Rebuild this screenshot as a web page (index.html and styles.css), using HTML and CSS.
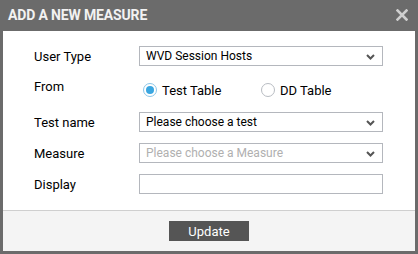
FILE: index.html
```html
<!DOCTYPE html>
<html>
<head>
<meta charset="utf-8">
<link rel="stylesheet" href="styles.css">
</head>
<body>
<div class="dialog">
  <div class="header">
    <div class="title">ADD A NEW MEASURE</div>
    <svg class="close" width="12" height="12" viewBox="0 0 12 12"><path d="M1.5 1.5L10.5 10.5M10.5 1.5L1.5 10.5" stroke="#cfcfcf" stroke-width="2.6" stroke-linecap="square"/></svg>
  </div>
  <div class="body">
    <div class="row">
      <div class="label">User Type</div>
      <div class="select"><span>WVD Session Hosts</span><svg class="chev" width="9" height="6" viewBox="0 0 9 6"><path d="M1 1L4.5 4.5L8 1" stroke="#555" stroke-width="2" fill="none"/></svg></div>
    </div>
    <div class="row radio-row">
      <div class="label">From</div>
      <div class="radios">
        <div class="radio checked"><span class="circle"><span class="dot"></span></span><span>Test Table</span></div>
        <div class="radio"><span class="circle"></span><span>DD Table</span></div>
      </div>
    </div>
    <div class="row">
      <div class="label">Test name</div>
      <div class="select"><span>Please choose a test</span><svg class="chev" width="9" height="6" viewBox="0 0 9 6"><path d="M1 1L4.5 4.5L8 1" stroke="#555" stroke-width="2" fill="none"/></svg></div>
    </div>
    <div class="row">
      <div class="label">Measure</div>
      <div class="select placeholder"><span>Please choose a Measure</span><svg class="chev" width="9" height="6" viewBox="0 0 9 6"><path d="M1 1L4.5 4.5L8 1" stroke="#555" stroke-width="2" fill="none"/></svg></div>
    </div>
    <div class="row">
      <div class="label">Display</div>
      <div class="select input"></div>
    </div>
  </div>
  <div class="footer">
    <div class="button">Update</div>
  </div>
</div>
</body>
</html>
```
FILE: styles.css
```css
html, body {
  margin: 0;
  padding: 0;
}
body {
  width: 418px;
  height: 254px;
  font-family: Roboto, "Liberation Sans", sans-serif;
  overflow: hidden;
}
.dialog {
  width: 418px;
  height: 254px;
  box-sizing: border-box;
  background: #6b6b6b;
  padding: 0 3px 3px 3px;
  display: flex;
  flex-direction: column;
}
.header {
  height: 31px;
  display: flex;
  align-items: center;
  justify-content: space-between;
  padding: 0 7px 0 5px;
  flex-shrink: 0;
}
.title {
  color: #f2f2f2;
  font-size: 14px;
  font-weight: 700;
  letter-spacing: -0.15px;
  margin-top: -1px;
}
.close {
  display: block;
  margin-top: -1px;
}
.body {
  background: #fff;
  padding: 15px 32px 16px 31px;
  display: flex;
  flex-direction: column;
  gap: 11px;
  border-bottom: 1px solid #cfcfcf;
}
.row {
  display: flex;
  align-items: center;
  height: 20px;
}
.radio-row {
  height: 24px;
}
.label {
  width: 105px;
  flex-shrink: 0;
  font-size: 13px;
  color: #000;
}
.radio-row .label {
  margin-top: -5px;
}
.select {
  flex: 1;
  height: 20px;
  box-sizing: border-box;
  border: 1px solid #b4b7bd;
  display: flex;
  align-items: center;
  justify-content: space-between;
  padding: 0 7px 0 6px;
  font-size: 12px;
  color: #000;
}
.select.placeholder {
  color: #b0b0b0;
}
.chev {
  display: block;
  margin-top: 1px;
}
.radios {
  display: flex;
  align-items: center;
  padding-left: 4px;
  margin-top: 2px;
}
.radio {
  display: flex;
  align-items: center;
  gap: 5px;
  font-size: 13px;
  color: #000;
}
.radio.checked {
  width: 118px;
}
.circle {
  width: 14px;
  height: 14px;
  box-sizing: border-box;
  border: 1px solid #b8bcc2;
  border-radius: 50%;
  display: flex;
  align-items: center;
  justify-content: center;
  background: #fff;
}
.checked .circle {
  border-color: #8cc6e8;
}
.dot {
  width: 8px;
  height: 8px;
  border-radius: 50%;
  background: #3aa6e0;
}
.footer {
  flex: 1;
  background: #f4f4f4;
  display: flex;
  align-items: center;
  justify-content: center;
}
.button {
  width: 80px;
  height: 20px;
  background: #555;
  color: #fff;
  font-size: 13px;
  display: flex;
  align-items: center;
  justify-content: center;
}
```
